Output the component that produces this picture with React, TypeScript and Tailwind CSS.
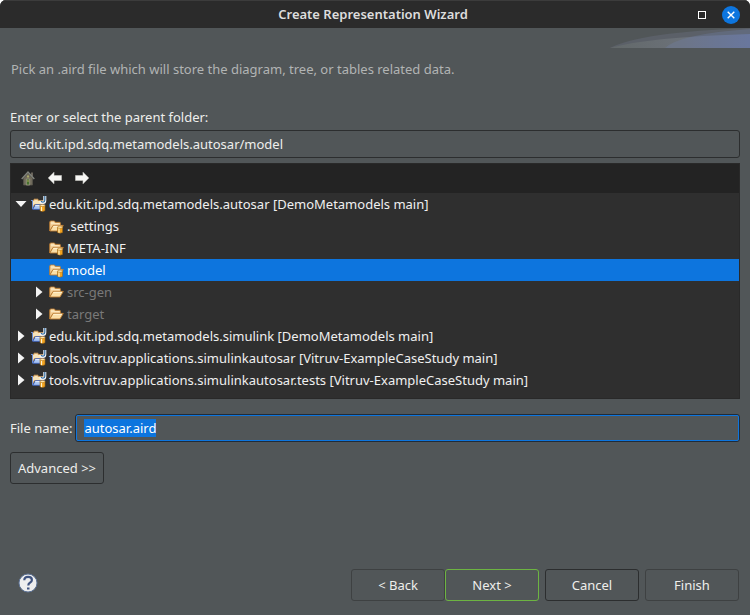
import { useEffect, useRef, useState } from "react";
import type { ReactNode } from "react";

function Database({ x, y }: { x: number; y: number }) {
  return (
    <g transform={`translate(${x} ${y})`}>
      <path d="M0 1.2v5.2q2.5 1.6 5 0V1.2z" fill="#f2a31f" stroke="#9c6418" strokeWidth="0.6" />
      <path d="M1.5 2v4.8" stroke="#fff3cf" strokeWidth="1.2" />
      <ellipse cx="2.5" cy="1.2" rx="2.5" ry="1.1" fill="#ffe9b0" stroke="#b9791f" strokeWidth="0.6" />
    </g>
  );
}

function FolderIcon({ database }: { database?: boolean }) {
  return (
    <svg width="16" height="16" viewBox="0 0 16 16" aria-hidden="true">
      <path d="M.7 13V4.2q0-1.2 1.3-1.2h3q1 0 1.3 1.3h4.2q1 0 1 1.2V8H4z" fill="#f3cd93" stroke="#b9792f" strokeWidth="0.9" />
      <path d="M2 4.2h3M2 5.7h8.5" stroke="#fdebc6" />
      <path d="M.9 13 4 7.4h10.3L11 13z" fill="#fbdfa8" stroke="#b9792f" strokeWidth="0.9" strokeLinejoin="round" />
      <path d="M4.4 8.3h8.6" stroke="#fff3d4" />
      {database && <Database x={8.5} y={8} />}
    </svg>
  );
}

function ProjectIcon() {
  return (
    <svg width="16" height="16" viewBox="0 0 16 16" aria-hidden="true">
      <path d="M1.5 12V4.5H3V3.2h4v1.3h5V8.5H3.5z" fill="#f8e3b8" stroke="#d29a55" strokeWidth="0.9" />
      <path d="M0 4.5h2M1.5 4.5V13" stroke="#6c8fd6" />
      <path d="M1.7 13.3 4.4 8.7h9.4L11 13.3z" fill="#a9c5f3" stroke="#3d62bd" strokeWidth="0.9" />
      <path d="M4.2 9.6h8" stroke="#e5efff" />
      <path d="M13.8 0v4.4q0 2-1.9 2T9.8 5" fill="none" stroke="#f4f8ff" strokeWidth="3" />
      <path d="M13.8 0v4.3q0 1.8-1.8 1.8T10.3 4.8" fill="none" stroke="#356d9e" strokeWidth="1.2" />
      <Database x={9} y={8.3} />
    </svg>
  );
}

function HomeIcon() {
  return (
    <svg width="16" height="16" viewBox="0 0 16 16" aria-hidden="true">
      <path d="M11 2.5h2V6h-2z" fill="#6b665c" />
      <path d="M3.5 8 8 3l4.5 5v7h-9z" fill="#6f6a5b" stroke="#55534a" strokeWidth="0.8" />
      <path d="M1.7 9 8 2l6.3 7" fill="none" stroke="#82857e" strokeWidth="1.3" />
      <path d="M7 5.5h2v2H7z" fill="#a9a86a" />
      <path d="M6.3 9h3.4v6H6.3z" fill="#46702f" stroke="#a09a86" strokeWidth="0.8" />
      <path d="M8 10v2" stroke="#a9a45a" />
    </svg>
  );
}

function ArrowIcon({ forward }: { forward?: boolean }) {
  return (
    <svg width="16" height="16" viewBox="0 0 16 16" aria-hidden="true">
      <path
        d={forward ? "M14.8 8 9 2.2v3.3H1.5v5H9v3.3z" : "M1.2 8 7 2.2v3.3h7.5v5H7v3.3z"}
        fill="#f7f7f5"
        stroke="#c9c9c4"
        strokeWidth="0.6"
        strokeLinejoin="round"
      />
    </svg>
  );
}

function Row(props: {
  label: string;
  icon: ReactNode;
  nested?: boolean;
  muted?: boolean;
  expander?: "open" | "closed";
  selected?: boolean;
  onSelect: () => void;
}) {
  const { label, icon, nested, muted, expander, selected, onSelect } = props;
  return (
    <li
      role="treeitem"
      aria-level={nested ? 2 : 1}
      aria-selected={!!selected}
      onClick={onSelect}
      className={`flex h-[22px] items-center whitespace-nowrap ${nested ? "pl-5" : "pl-0.5"} ${
        selected ? "bg-[#0d75de] text-white" : muted ? "text-[#797979]" : "text-[#f0f0f0]"
      }`}
    >
      <span className="mr-0.5 flex w-4 shrink-0 items-center justify-center">
        {expander && (
          <button type="button" aria-label={`Toggle ${label}`} className="flex">
            <svg width="16" height="14" viewBox="0 0 16 14" aria-hidden="true">
              <path d={expander === "open" ? "M2.5 4h11L8 10z" : "M5 1.5v11L11.5 7z"} fill="#f4f4f4" />
            </svg>
          </button>
        )}
      </span>
      <span className="mr-0.5 shrink-0">{icon}</span>
      <span>{label}</span>
    </li>
  );
}

const rows = [
  { label: "edu.kit.ipd.sdq.metamodels.autosar [DemoMetamodels main]", kind: "project", expander: "open" },
  { label: ".settings", kind: "folder" },
  { label: "META-INF", kind: "folder" },
  { label: "model", kind: "folder" },
  { label: "src-gen", kind: "ignored", expander: "closed" },
  { label: "target", kind: "ignored", expander: "closed" },
  { label: "edu.kit.ipd.sdq.metamodels.simulink [DemoMetamodels main]", kind: "project", expander: "closed" },
  { label: "tools.vitruv.applications.simulinkautosar [Vitruv-ExampleCaseStudy main]", kind: "project", expander: "closed" },
  { label: "tools.vitruv.applications.simulinkautosar.tests [Vitruv-ExampleCaseStudy main]", kind: "project", expander: "closed" },
] as const;

const buttonBase = "h-8 rounded-[3px] border";

export default function App() {
  const [selected, setSelected] = useState("model");
  const fileName = useRef<HTMLInputElement>(null);

  useEffect(() => {
    fileName.current?.focus();
    fileName.current?.select();
  }, []);

  return (
    <div className="min-h-screen bg-white">
      <div className="flex min-h-screen flex-col overflow-hidden rounded-t-md bg-[#515658] font-['Noto_Sans',sans-serif] text-[13px] leading-[18px] text-[#eeeeec]">
        <header className="grid h-7 grid-cols-[1fr_auto_1fr] items-center border-t border-[#3c3c3c] bg-[#2b2b2b] pr-1">
          <h1 className="col-start-2 pb-0.5 text-[13px] font-semibold text-[#dddddd]">
            Create Representation Wizard
          </h1>
          <div className="flex items-center justify-end gap-4 pr-1.5">
            <button type="button" aria-label="Maximize" className="size-2 border border-white" />
            <button type="button" aria-label="Close" className="flex size-[18px] items-center justify-center rounded-full bg-[#0d75de]">
              <svg width="8" height="8" viewBox="0 0 8 8" aria-hidden="true">
                <path d="m.7.7 6.6 6.6m0-6.6L.7 7.3" stroke="white" strokeWidth="1.4" />
              </svg>
            </button>
          </div>
        </header>

        <section className="flex h-20 flex-col">
          <svg className="self-end" width="140" height="20" viewBox="0 0 140 20" aria-hidden="true">
            <defs>
              <linearGradient id="sweep" x1="0" x2="1">
                <stop offset="0" stopColor="#626869" />
                <stop offset="0.5" stopColor="#6b7178" />
                <stop offset="1" stopColor="#667399" />
              </linearGradient>
            </defs>
            <path d="M0 20Q30 4 140 0V20z" fill="#5b6068" />
            <path d="M0 20Q38 9 140 6V20z" fill="url(#sweep)" />
            <path d="M55 20Q70 6 140 1V20z" fill="#7181a8" fillOpacity="0.32" />
          </svg>
          <p className="mt-3 pl-[11px] text-[#b1b4b4]">
            Pick an .aird file which will store the diagram, tree, or tables related data.
          </p>
        </section>

        <main className="px-2.5">
          <label htmlFor="parent-folder" className="block">Enter or select the parent folder:</label>
          <input
            id="parent-folder"
            defaultValue="edu.kit.ipd.sdq.metamodels.autosar/model"
            className="mt-1 block h-7 w-full rounded-[3px] border border-[#2c2e2f] bg-[#515658] px-2 outline-none"
          />
          <div className="mt-[5px] border border-[#292929] bg-[#2f2f2f] pb-[7px]">
            <div className="flex h-[29px] items-center gap-[11px] bg-[#232323] pb-0.5 pl-[9px]">
              <button type="button" aria-label="Home"><HomeIcon /></button>
              <button type="button" aria-label="Back"><ArrowIcon /></button>
              <button type="button" aria-label="Forward"><ArrowIcon forward /></button>
            </div>
            <ul role="tree" aria-label="Parent folder">
              {rows.map((row) => (
                <Row
                  key={row.label}
                  label={row.label}
                  icon={row.kind === "project" ? <ProjectIcon /> : <FolderIcon database={row.kind === "folder"} />}
                  nested={row.kind !== "project"}
                  muted={row.kind === "ignored"}
                  expander={"expander" in row ? row.expander : undefined}
                  selected={row.label === selected}
                  onSelect={() => setSelected(row.label)}
                />
              ))}
            </ul>
          </div>
          <div className="mt-[15px] flex items-center gap-[3px]">
            <label htmlFor="file-name" className="shrink-0">File name:</label>
            <div className="flex-1 rounded-[3px] border border-[#202b38]">
              <input
                id="file-name"
                ref={fileName}
                defaultValue="autosar.aird"
                className="block h-[26px] w-full rounded-[2px] border border-[#0d75de] bg-[#515658] px-[7px] outline-none selection:bg-[#0d75de] selection:text-white"
              />
            </div>
          </div>
          <button type="button" className={`${buttonBase} mt-2.5 w-[94px] border-[#2c2e2f]`}>Advanced &gt;&gt;</button>
        </main>

        <footer className="mt-auto flex items-center pr-[11px] pb-3.5 pl-[18px]">
          <button type="button" aria-label="Help" className="mb-1">
            <svg width="20" height="20" viewBox="0 0 20 20" aria-hidden="true">
              <circle cx="10" cy="10" r="9" fill="#eeeeee" stroke="#5f7599" />
              <path d="M6.3 7.3q0-3.4 3.8-3.4t3.8 3q0 1.8-2 2.8-1.6.8-1.6 2.8" fill="none" stroke="#405480" strokeWidth="2.2" />
              <path d="M9 14.5h2.5v2H9z" fill="#405480" />
            </svg>
          </button>
          <div className="ml-auto flex">
            <button type="button" className={`${buttonBase} w-[94px] border-[#3e4142]`}>&lt; Back</button>
            <button type="button" className={`${buttonBase} w-[94px] border-[#6db442]`}>Next &gt;</button>
            <button type="button" className={`${buttonBase} ml-1.5 w-[94px] border-[#2c2e2f]`}>Cancel</button>
            <button type="button" className={`${buttonBase} ml-1.5 w-[94px] border-[#3e4142]`}>Finish</button>
          </div>
        </footer>
      </div>
    </div>
  );
}
